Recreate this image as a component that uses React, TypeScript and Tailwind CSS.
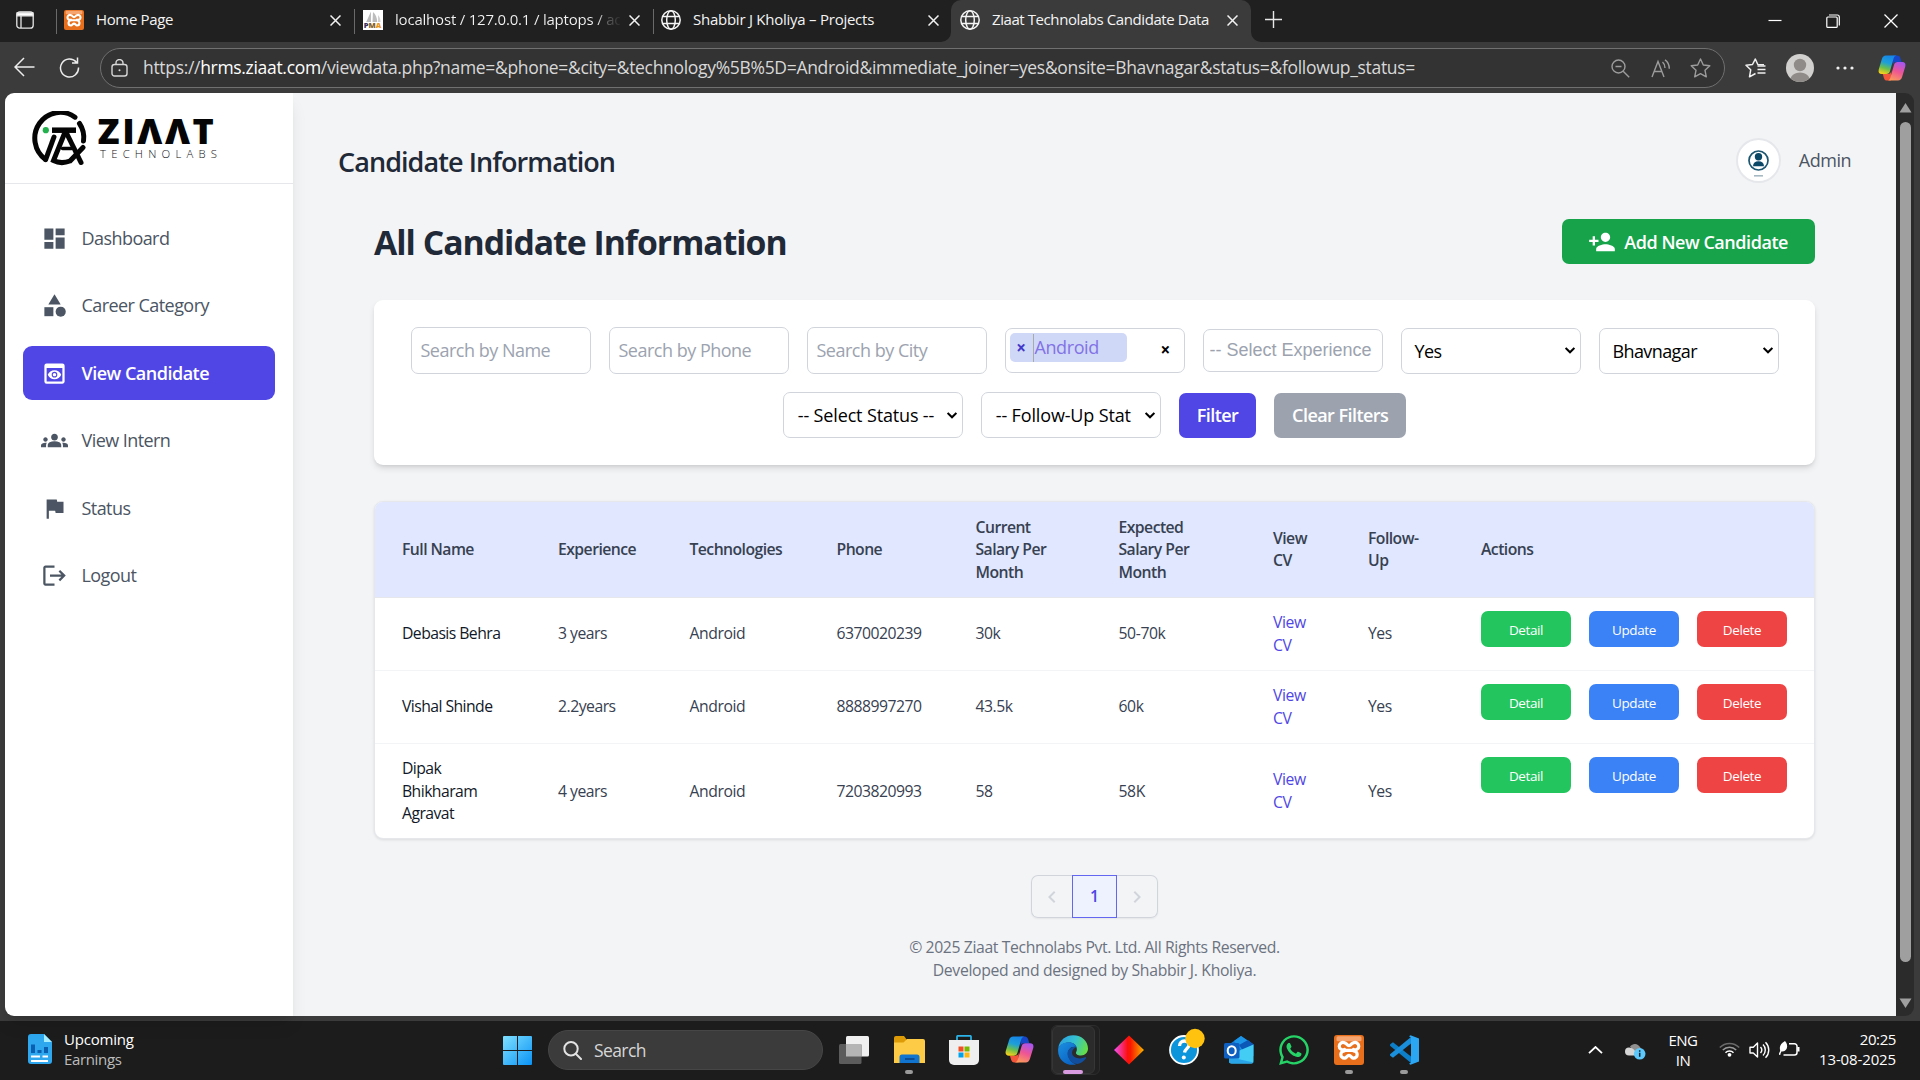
import React from 'react';
import type { ReactNode } from 'react';
import {
  MdCategory,
  MdChevronLeft,
  MdChevronRight,
  MdDashboard,
  MdFlag,
  MdGroups,
  MdLogout,
  MdPersonAdd,
  MdPreview,
} from 'react-icons/md';
import { FaWhatsapp } from 'react-icons/fa';

/* ---------- browser icons ---------- */

function CloseX() {
  return (
    <svg width="11" height="11" viewBox="0 0 11 11" stroke="#f2f2f2" strokeWidth="1.5" className="shrink-0">
      <path d="M0.5 0.5l10 10M10.5 0.5l-10 10" />
    </svg>
  );
}

function Globe() {
  return (
    <svg width="20" height="20" viewBox="0 0 20 20" fill="none" stroke="#f5f5f5" strokeWidth="1.5" className="shrink-0">
      <circle cx="10" cy="10" r="9.2" />
      <ellipse cx="10" cy="10" rx="4.3" ry="9.2" />
      <path d="M1.6 6.6h16.8M1.6 13.4h16.8" />
    </svg>
  );
}

function XamppIcon({ size }: { size: number }) {
  return (
    <svg width={size} height={size} viewBox="0 0 30 30" className="shrink-0">
      <rect width="30" height="30" rx="3" fill="#e8701c" />
      <rect x="2.5" y="1.2" width="25" height="5" rx="1.5" fill="#f6a571" />
      <path
        d="M10.5 7.8a3.7 3.7 0 1 0 0 6.7M19.5 7.8a3.7 3.7 0 1 1 0 6.7M10.5 23.2a3.7 3.7 0 1 1 0-7.4M19.5 23.2a3.7 3.7 0 1 0 0-7.4M10.5 7.8c2 0 2.4 2.8 4.5 2.8s2.5-2.8 4.5-2.8M10.5 23.2c2 0 2.4-2.8 4.5-2.8s2.5 2.8 4.5 2.8M11 15.3h8"
        fill="none"
        stroke="#fff"
        strokeWidth="3.2"
        strokeLinecap="round"
      />
    </svg>
  );
}

function PmaIcon() {
  return (
    <svg width="20" height="20" viewBox="0 0 20 20" className="shrink-0">
      <rect width="20" height="20" fill="#fff" />
      <path d="M8 1.5V12H3.2zM10 2c3 2.500 4 6 4.200 10H9.500z" fill="#bdbdbd" />
      <path d="M15 5c2 2 2.500 5 2.500 7H15z" fill="#d2d2d2" />
      <text x="0.8" y="18.3" fontSize="7.5" fontWeight="800" fontFamily="Open Sans, sans-serif" fill="#34345e">
        P<tspan fill="#8a5f2a">M</tspan><tspan fill="#e8941a">A</tspan>
      </text>
    </svg>
  );
}

function Copilot({ id, size }: { id: string; size: number }) {
  return (
    <svg width={size} height={size} viewBox="0 0 28 28" className="shrink-0">
      <defs>
        <linearGradient id={id + 'a'} x1="0.6" y1="0" x2="0.3" y2="1">
          <stop offset="0" stopColor="#1686e8" />
          <stop offset="0.4" stopColor="#1e9fd8" />
          <stop offset="0.7" stopColor="#6cc04a" />
          <stop offset="1" stopColor="#f6cf1c" />
        </linearGradient>
        <linearGradient id={id + 'b'} x1="0.7" y1="0" x2="0.3" y2="1">
          <stop offset="0" stopColor="#a855f0" />
          <stop offset="0.5" stopColor="#ee5594" />
          <stop offset="1" stopColor="#fb9a5c" />
        </linearGradient>
      </defs>
      <path d="M15 1.500h4c2 0 3 1.300 3.500 3L23.500 8h-5c-2 0-3 1-3.500 3z" fill="#1746c8" />
      <path d="M13 26.500H9c-1.700 0-2.600-1-3.100-2.600L4.800 20H10c2 0 2.800-1 3.300-3z" fill="#f2553a" />
      <path d="M8 1.500h10.500c-1.700.3-2.500 1.500-3 3.300l-3.400 12C11.500 19 10.300 20 8.300 20H3.800C1 20 0 18 .8 15.200L3.900 5C4.600 2.800 5.800 1.500 8 1.500z" fill={`url(#${id}a)`} />
      <path d="M20 26.500H9.500c1.700-.3 2.500-1.500 3-3.300l3.400-12C16.500 9 17.700 8 19.700 8h4.500c2.800 0 3.800 2 3 4.800L24.100 23c-.7 2.200-1.900 3.500-4.100 3.500z" fill={`url(#${id}b)`} />
    </svg>
  );
}

/* ---------- browser chrome ---------- */

function Separator() {
  return <div className="mt-[9px] h-[25px] w-px bg-[#6a6a6a]" />;
}

function TabStrip() {
  return (
    <div className="flex h-[42px] bg-[#202020] text-[15px] leading-[36px] text-[#f4f4f4]">
      <div className="flex w-[56px] pt-[11px] pl-4">
        <svg width="18" height="18" viewBox="0 0 18 18" fill="none" stroke="#e6e6e6" strokeWidth="1.300">
          <rect x="0.8" y="0.8" width="16.4" height="16.4" rx="3" />
          <path d="M5 5v12" />
          <path d="M1 1.800h16v3H1z" fill="#fff" />
        </svg>
      </div>
      <Separator />
      <div className="flex h-10 w-[297px] items-center pl-[7px]">
        <XamppIcon size={20} />
        <span className="ml-3 flex-1 pb-[2px] tracking-[-0.36px]">Home Page</span>
        <CloseX />
        <span className="w-[13px]" />
      </div>
      <Separator />
      <div className="flex h-10 w-[298px] items-center pl-2">
        <PmaIcon />
        <span className="ml-3 w-[225px] bg-[linear-gradient(90deg,#f4f4f4_202px,#666_212px,#202020_228px)] bg-clip-text pb-[2px] tracking-[-0.2px] whitespace-nowrap text-transparent">
          localhost / 127.0.0.1 / laptops / ad
        </span>
        <span className="w-[9px]" />
        <CloseX />
      </div>
      <Separator />
      <div className="flex h-10 w-[297px] items-center pl-[7px]">
        <Globe />
        <span className="ml-3 flex-1 pb-[2px] tracking-[-0.25px] whitespace-nowrap">Shabbir J Kholiya – Projects</span>
        <CloseX />
        <span className="w-[12px]" />
      </div>
      <div className="relative flex h-[42px] w-[300px] rounded-t-[10px] bg-[#3b3b3b]">
        <svg width="10" height="10" viewBox="0 0 10 10" className="absolute bottom-0 -left-[10px]">
          <path d="M10 0v10H0A10 10 0 0 0 10 0z" fill="#3b3b3b" />
        </svg>
        <svg width="10" height="10" viewBox="0 0 10 10" className="absolute -right-[10px] bottom-0">
          <path d="M0 0v10h10A10 10 0 0 1 0 0z" fill="#3b3b3b" />
        </svg>
        <div className="flex h-10 w-full items-center pl-[9px]">
          <Globe />
          <span className="ml-3 flex-1 pb-[2px] tracking-[-0.42px] whitespace-nowrap">Ziaat Technolabs Candidate Data</span>
          <CloseX />
          <span className="w-[13px]" />
        </div>
      </div>
      <svg width="17" height="17" viewBox="0 0 17 17" stroke="#e8e8e8" strokeWidth="1.400" className="mt-[11px] ml-[14px]">
        <path d="M8.500 0v17M0 8.500h17" />
      </svg>
      <div className="mt-[14px] mr-[22px] ml-auto flex gap-[44px]">
        <svg width="14" height="14" viewBox="0 0 14 14" stroke="#fff" strokeWidth="1.200">
          <path d="M0.500 6.500h13" />
        </svg>
        <svg width="14" height="14" viewBox="0 0 14 14" fill="none" stroke="#fff" strokeWidth="1.200">
          <rect x="0.800" y="3" width="10.400" height="10.400" rx="1" />
          <path d="M3 1h8.300a2 2 0 0 1 2 2v8.500" />
        </svg>
        <svg width="14" height="14" viewBox="0 0 14 14" stroke="#fff" strokeWidth="1.300">
          <path d="M0.500 0.500l13 13M13.500 0.500l-13 13" />
        </svg>
      </div>
    </div>
  );
}

function Toolbar() {
  return (
    <div className="flex h-[51px] items-start bg-[#3b3b3b]">
      <svg width="21" height="20" viewBox="0 0 21 20" fill="none" stroke="#ededed" strokeWidth="1.500" className="mt-[15px] ml-[14px]">
        <path d="M20.500 10H1M10 1L1 10l9 9" />
      </svg>
      <svg width="21" height="21" viewBox="0 0 21 21" fill="none" stroke="#ededed" strokeWidth="1.500" className="mt-[15px] ml-6">
        <path d="M17.500 5.300A9 9 0 1 0 19.500 10.500M18.500 0.500v5.500h-5.500" />
      </svg>
      <div className="mt-[6px] ml-[20px] flex h-10 w-[1625px] items-center rounded-full border border-[#707070] bg-[#333333] pr-[13px] pl-[10px]">
        <svg width="17" height="18" viewBox="0 0 17 18" fill="none" stroke="#d6d6d6" strokeWidth="1.400">
          <rect x="1" y="5.500" width="15" height="11.500" rx="2.500" />
          <path d="M5 5.500V4a3.500 3.500 0 0 1 7 0v1.500" />
          <circle cx="8.500" cy="11.200" r="1" fill="#d6d6d6" stroke="none" />
        </svg>
        <span className="ml-[15px] flex-1 pb-[2px] text-[17.5px] leading-[34px] tracking-[-0.315px] whitespace-nowrap text-[#d8d8d8]">
          https://<span className="text-white">hrms.ziaat.com</span>
          /viewdata.php?name=&amp;phone=&amp;city=&amp;technology%5B%5D=Android&amp;immediate_joiner=yes&amp;onsite=Bhavnagar&amp;status=&amp;followup_status=
        </span>
        <svg width="19" height="19" viewBox="0 0 19 19" fill="none" stroke="#9c9c9c" strokeWidth="1.400">
          <circle cx="7.500" cy="7.500" r="6.500" />
          <path d="M12.200 12.200l6 6M4.500 7.500h6" />
        </svg>
        <svg width="20" height="19" viewBox="0 0 20 19" fill="none" stroke="#9c9c9c" strokeWidth="1.400" className="ml-[21px]">
          <path d="M1 18L7 2.500 13 18M3.200 12.500h7.600M11.500 3c1.800 1.500 2.500 3.500 2.500 6M14 0.800c3 2 4.300 5 4.300 9" />
        </svg>
        <svg width="21" height="20" viewBox="0 0 21 20" fill="none" stroke="#9c9c9c" strokeWidth="1.400" strokeLinejoin="round" className="ml-[19px]">
          <path d="M10.500 1l2.800 6 6.500.8-4.800 4.500 1.300 6.500-5.800-3.200-5.800 3.200L6 12.300 1.200 7.800l6.500-.8z" />
        </svg>
      </div>
      <svg width="21" height="20" viewBox="0 0 21 20" fill="none" stroke="#f0f0f0" strokeWidth="1.500" strokeLinejoin="round" className="mt-4 ml-[20px]">
        <path d="M19 6.800L12.800 6.500 10.300 1 7.500 6.500 1 7.300l4.700 4.500-1.200 7 6-3.300" />
        <path d="M12.500 8h8M12.500 11.500h8M12.500 15h8" />
      </svg>
      <svg width="28" height="28" viewBox="0 0 28 28" className="mt-[12px] ml-5">
        <clipPath id="profile"><circle cx="14" cy="14" r="14" /></clipPath>
        <g clipPath="url(#profile)">
          <rect width="28" height="28" fill="#d2d0ce" />
          <circle cx="14" cy="11" r="6.200" fill="#8f8b88" />
          <path d="M4 28c0-6 4-9.500 10-9.500S24 22 24 28z" fill="#8f8b88" />
        </g>
      </svg>
      <svg width="18" height="4" viewBox="0 0 18 4" fill="#f0f0f0" className="mt-6 ml-[22px]">
        <circle cx="2" cy="2" r="1.600" />
        <circle cx="9" cy="2" r="1.600" />
        <circle cx="16" cy="2" r="1.600" />
      </svg>
      <div className="mt-[12px] ml-[24px]">
        <Copilot id="cpTop" size={28} />
      </div>
    </div>
  );
}

function Scrollbar() {
  return (
    <div className="flex w-[18px] flex-col items-center rounded-r-[9px] bg-[#2b2b2b] pt-[10px] pb-2">
      <svg width="13" height="10" viewBox="0 0 13 10" fill="#9f9f9f"><path d="M6.500 0L12.500 9.500h-12z" /></svg>
      <div className="mt-[9px] h-[840px] w-[11px] rounded-full bg-[#9f9f9f]" />
      <svg width="13" height="10" viewBox="0 0 13 10" fill="#9f9f9f" className="mt-auto"><path d="M6.500 10L0.500 0.500h12z" /></svg>
    </div>
  );
}

/* ---------- sidebar ---------- */

function Logo() {
  return (
    <svg width="188" height="56" viewBox="0 0 188 56">
      <g fill="none" stroke="#050505" strokeWidth="5" strokeLinecap="round">
        <path d="M43 6.200A25 25.500 0 0 0 13.500 48.500" />
        <path d="M47.500 12.500A25 25 0 0 1 51.500 30" />
        <path d="M20 19.200H44" strokeLinecap="butt" strokeWidth="5.500" />
        <path d="M22 26L13.700 48.500" />
        <path d="M33.500 20L21.500 49.500Q29 53.500 38 50L51 36.500" />
        <path d="M33.500 20L49 51.500" />
        <path d="M30.500 37.500h9" strokeWidth="3.500" />
      </g>
      <circle cx="13.800" cy="19.200" r="3.100" fill="#22b14c" />
      <text x="65.500" y="32.800" fontFamily="Open Sans, sans-serif" fontWeight="800" fontSize="34.500" letterSpacing="2.500" fill="#050505" textLength="119" lengthAdjust="spacingAndGlyphs">
        ZIΛΛT
      </text>
      <text x="68" y="46.800" fontFamily="Open Sans, sans-serif" fontWeight="300" fontSize="11.300" fill="#111" textLength="117">
        TECHNOLABS
      </text>
    </svg>
  );
}

const navItems: { label: string; icon: ReactNode; active?: boolean }[] = [
  { label: 'Dashboard', icon: <MdDashboard size={27} /> },
  { label: 'Career Category', icon: <MdCategory size={27} /> },
  { label: 'View Candidate', icon: <MdPreview size={27} />, active: true },
  { label: 'View Intern', icon: <MdGroups size={27} /> },
  { label: 'Status', icon: <MdFlag size={27} /> },
  { label: 'Logout', icon: <MdLogout size={27} /> },
];

function Sidebar() {
  return (
    <aside className="z-10 flex w-[288px] flex-col rounded-l-[9px] bg-white shadow-[0_11px_17px_-3px_rgba(0,0,0,0.1),0_4px_7px_-4px_rgba(0,0,0,0.1)]">
      <div className="h-[91px] border-b border-[#e5e7eb] pt-[18px] pl-[27px]">
        <Logo />
      </div>
      <nav className="flex flex-col gap-[13.5px] px-[18px] pt-[27px]">
        {navItems.map((item) => (
          <a
            key={item.label}
            className={
              item.active
                ? 'flex h-[54px] items-center gap-[13.5px] rounded-[9px] bg-[#4f46e5] px-[18px] text-[18px] font-semibold tracking-[-0.5px] text-white'
                : 'flex h-[54px] items-center gap-[13.5px] rounded-[9px] px-[18px] text-[18px] tracking-[-0.56px] text-[#4b5563]'
            }
          >
            {item.icon}
            <span>{item.label}</span>
          </a>
        ))}
      </nav>
    </aside>
  );
}

/* ---------- filters ---------- */

function SearchInput({ placeholder }: { placeholder: string }) {
  return (
    <input
      placeholder={placeholder}
      className="h-[47px] w-[180px] rounded-[7px] border border-[#d1d5db] bg-white px-[9px] pb-[2px] text-[18px] tracking-[-0.5px] placeholder:text-[#9ca3af]"
    />
  );
}

function SelectBox({ label, tight = true }: { label: string; tight?: boolean }) {
  return (
    <div className="flex h-[46px] w-[180px] items-center rounded-[7px] border border-[#d1d5db] bg-white pr-[4px] pl-[13px] text-[18px] text-black">
      <span className={tight ? 'flex-1 pt-px tracking-[-0.6px] whitespace-nowrap' : 'flex-1 pt-px pl-px tracking-[-0.15px] whitespace-nowrap'}>
        {label}
      </span>
      <svg width="10" height="7" viewBox="0 0 10 7" fill="none" stroke="#000" strokeWidth="2.100" className="mr-px shrink-0">
        <path d="M0.600 0.900L5 5.200 9.400 0.900" />
      </svg>
    </div>
  );
}

function FilterCard() {
  return (
    <section className="mt-9 flex flex-wrap items-center justify-center gap-[18px] rounded-[9px] bg-white p-[27px] shadow-[0_4px_7px_-1px_rgba(0,0,0,0.12),0_2px_4px_-2px_rgba(0,0,0,0.12)]">
      <SearchInput placeholder="Search by Name" />
      <SearchInput placeholder="Search by Phone" />
      <SearchInput placeholder="Search by City" />
      <div className="flex h-[45px] w-[180px] items-start rounded-[7px] border border-[#d1d5db] bg-white pt-1 pl-1">
        <div className="flex h-[29px] w-[117px] items-center rounded-[5px] bg-[#cfd8f7] text-[18px] text-[#8272e6]">
          <span className="flex w-[24px] justify-center border-r border-[#aaaaaa] text-[17px] leading-[28px] font-bold text-[#4338ca]">×</span>
          <span className="pl-px tracking-[-0.4px]">Android</span>
        </div>
        <span className="ml-[34px] pt-[3px] text-[17px] leading-[28px] font-bold text-black">×</span>
      </div>
      <div className="flex h-[43px] w-[180px] items-center overflow-hidden rounded-[7px] border border-[#d1d5db] bg-white pl-[6px]">
        <span className="h-[21px] overflow-hidden font-['Liberation_Sans'] text-[18px] leading-[20px] whitespace-nowrap text-[#9ca3af]">
          -- Select Experience
        </span>
      </div>
      <SelectBox label="Yes" />
      <SelectBox label="Bhavnagar" />
      <SelectBox label="-- Select Status --" tight={false} />
      <SelectBox label="-- Follow-Up Stat" tight={false} />
      <button className="h-[45px] rounded-[7px] bg-[#4f46e5] px-[18px] pt-px text-[18px] font-semibold tracking-[-0.6px] text-white">Filter</button>
      <button className="h-[45px] rounded-[7px] bg-[#9ca3af] px-[18px] pt-px text-[18px] font-semibold tracking-[-0.56px] text-white">Clear Filters</button>
    </section>
  );
}

/* ---------- table ---------- */

const columns = [
  { label: 'Full Name', width: 156 },
  { label: 'Experience', width: 131.5 },
  { label: 'Technologies', width: 147 },
  { label: 'Phone', width: 139 },
  { label: 'Current Salary Per Month', width: 143 },
  { label: 'Expected Salary Per Month', width: 154.5 },
  { label: 'View CV', width: 95 },
  { label: 'Follow-Up', width: 113 },
  { label: 'Actions', width: 360 },
];

const candidates = [
  { name: 'Debasis Behra', experience: '3 years', phone: '6370020239', current: '30k', expected: '50-70k' },
  { name: 'Vishal Shinde', experience: '2.2years', phone: '8888997270', current: '43.5k', expected: '60k' },
  { name: 'Dipak Bhikharam Agravat', experience: '4 years', phone: '7203820993', current: '58', expected: '58K' },
];

function CandidateTable() {
  return (
    <section className="mt-9 overflow-hidden rounded-[9px] border border-[#e5e7eb] bg-white shadow-[0_1px_3px_rgba(0,0,0,0.1)]">
      <table className="w-full table-fixed border-collapse text-left text-[15.75px] leading-[22.5px] tracking-[-0.5px] text-[#374151]">
        <colgroup>
          {columns.map((c) => (
            <col key={c.label} style={{ width: c.width }} />
          ))}
        </colgroup>
        <thead className="bg-[#e0e7ff]">
          <tr className="h-[95px] border-b border-[#e5e7eb]">
            {columns.map((c) => (
              <th key={c.label} className="pr-[24px] pl-[27px] font-semibold tracking-[-0.55px]">
                {c.label}
              </th>
            ))}
          </tr>
        </thead>
        <tbody>
          {candidates.map((c) => (
            <tr key={c.name} className="h-[73px] border-b border-[#f3f4f6] last:h-[95px] last:border-b-0">
              <td className="pr-[24px] pl-[27px] tracking-[-0.56px] text-[#111827]">{c.name}</td>
              <td className="pl-[27px]">{c.experience}</td>
              <td className="pl-[27px] tracking-[-0.42px]">Android</td>
              <td className="pl-[27px]">{c.phone}</td>
              <td className="pl-[27px]">{c.current}</td>
              <td className="pl-[27px] tracking-[-0.4px]">{c.expected}</td>
              <td className="pr-[27px] pl-[27px] tracking-[-0.4px] text-[#4f46e5]">View CV</td>
              <td className="pl-[27px]">Yes</td>
              <td className="pt-[13px] pl-[27px] align-top">
                <div className="flex gap-[18px] text-[13.5px] leading-[35px] tracking-[-0.4px] text-white">
                  <button className="h-9 w-[90px] rounded-[7px] bg-[#22c55e] pt-[2px]">Detail</button>
                  <button className="h-9 w-[90px] rounded-[7px] bg-[#3b82f6] pt-[2px]">Update</button>
                  <button className="h-9 w-[90px] rounded-[7px] bg-[#ef4444] pt-[2px]">Delete</button>
                </div>
              </td>
            </tr>
          ))}
        </tbody>
      </table>
    </section>
  );
}

function Pagination() {
  return (
    <div className="mt-9 flex justify-center">
      <div className="flex h-[43px] rounded-[7px] shadow-[0_1px_2px_rgba(0,0,0,0.06)]">
        <span className="flex w-[41px] items-center justify-center rounded-l-[7px] border border-r-0 border-[#d1d5db] text-[#d1d5db]">
          <MdChevronLeft size={24} />
        </span>
        <span className="flex w-[45px] items-center justify-center border border-[#6366f1] bg-[#eef2ff] text-[15.75px] font-semibold text-[#4f46e5]">1</span>
        <span className="flex w-[41px] items-center justify-center rounded-r-[7px] border border-l-0 border-[#d1d5db] text-[#d1d5db]">
          <MdChevronRight size={24} />
        </span>
      </div>
    </div>
  );
}

function Main() {
  return (
    <main className="flex flex-1 flex-col bg-[#f3f4f6] pt-[45px] pr-[45px] pl-[45px]">
      <header className="flex h-[45px] items-center justify-between">
        <h1 className="pt-[4px] text-[27px] font-semibold tracking-[-0.93px] text-[#1f2937]">Candidate Information</h1>
        <div className="flex items-center gap-[18px]">
          <svg width="45" height="45" viewBox="0 0 45 45">
            <circle cx="22.500" cy="22.500" r="21.500" fill="#fff" stroke="#e5e7eb" strokeWidth="2" />
            <circle cx="22.500" cy="22.500" r="9.500" fill="none" stroke="#1b5570" strokeWidth="1.700" />
            <circle cx="22.500" cy="18.800" r="3.700" fill="#0a4766" />
            <path d="M17 28.300c.2-3.300 2-5 5.500-5s5.300 1.700 5.500 5z" fill="#0a4766" />
            <path d="M18 37.800h9" stroke="#a5b9c3" strokeWidth="1.600" />
          </svg>
          <span className="text-[18px] tracking-[-0.5px] text-[#4b5563]">Admin</span>
        </div>
      </header>
      <div className="px-9 pt-9">
        <div className="flex h-[45px] items-center justify-between">
          <h2 className="pt-[2px] text-[33.75px] font-bold tracking-[-1px] text-[#1f2937]">All Candidate Information</h2>
          <button className="flex h-[45px] items-center rounded-[7px] bg-[#16a34a] pr-[27px] pl-[26px] text-[18px] font-semibold tracking-[-0.45px] text-white">
            <MdPersonAdd size={28} />
            <span className="ml-[8px] pt-px">Add New Candidate</span>
          </button>
        </div>
        <FilterCard />
        <CandidateTable />
        <Pagination />
        <footer className="mt-[18px] text-center text-[15.75px] leading-[22.5px] text-[#6b7280]">
          <p className="tracking-[-0.38px]">© 2025 Ziaat Technolabs Pvt. Ltd. All Rights Reserved.</p>
          <p className="tracking-[-0.32px]">Developed and designed by Shabbir J. Kholiya.</p>
        </footer>
      </div>
    </main>
  );
}

/* ---------- taskbar ---------- */

function EdgeIcon() {
  return (
    <svg width="30" height="30" viewBox="0 0 30 30" className="shrink-0">
      <defs>
        <linearGradient id="edgeTop" x1="0" y1="0.3" x2="1" y2="0.6">
          <stop offset="0" stopColor="#2a9fe0" />
          <stop offset="0.500" stopColor="#35c1d0" />
          <stop offset="1" stopColor="#66e043" />
        </linearGradient>
        <linearGradient id="edgeLeft" x1="0" y1="0" x2="0.700" y2="1">
          <stop offset="0" stopColor="#1b8fe0" />
          <stop offset="1" stopColor="#0a63c4" />
        </linearGradient>
      </defs>
      <path d="M0.300 13C1.500 5 8 0.300 15.200 0.300 24 0.300 30 6.500 30 13.500c0 4-3 7-7 7-3.500 0-5.500-1.500-5-3 .6-1.300 1-2.200.8-4C18.300 9.500 15 7.500 11 7.500 6 7.500 2 10 0.300 13z" fill="url(#edgeTop)" />
      <path d="M0.300 13C2 9.500 6 7.300 10.500 7.300c4 0 7 2 8 4.700-5-1.500-9.500 2.500-8.500 8 .8 4.500 4 8 8 9.500C8 31.500-1.500 24 0.300 13z" fill="url(#edgeLeft)" />
      <path d="M18.500 12c-6-1-10.500 4-8.500 9.500 1.500 4.500 5.500 7.500 9.500 7.500 3.500-.8 6.500-3 8.500-5.800.4-.8-.3-1.200-.8-.9C21 25 13.800 22.500 14 17.500c.1-2.500 2-4.300 4.500-5.500z" fill="#114f9e" />
    </svg>
  );
}

function TaskCell({ children, mark }: { children: ReactNode; mark?: boolean }) {
  return (
    <div className="flex w-[55px] flex-col items-center pt-[13px]">
      <div className="flex h-[31px] items-center">{children}</div>
      {mark && <div className="mt-[5px] h-1 w-2 rounded-full bg-[#9a9a9a]" />}
    </div>
  );
}

function Taskbar() {
  return (
    <div className="flex h-[59px] bg-[#1c1c1c] text-[15px] text-white">
      <div className="flex w-[503px] pt-[8px] pl-[28px]">
        <svg width="24" height="30" viewBox="0 0 24 30" className="mt-[5px]">
          <path d="M3 0h13l8 8v19a3 3 0 0 1-3 3H3a3 3 0 0 1-3-3V3a3 3 0 0 1 3-3z" fill="#2ea7ee" />
          <path d="M16 0l8 8h-8z" fill="#a4ecff" />
          <path d="M3 10.500h4v8.500H3zM9.500 16h4v3h-4zM16 13h4v6h-4z" fill="#0b5fb0" />
          <path d="M3 22.500h9M14.500 22.500H20M3 27h17" stroke="#fff" strokeWidth="2" />
        </svg>
        <div className="ml-3 leading-[20px]">
          <div className="tracking-[-0.2px]">Upcoming</div>
          <div className="tracking-[-0.35px] text-[#bdbdbd]">Earnings</div>
        </div>
      </div>
      <svg width="29" height="29" viewBox="0 0 29 29" className="mt-[15px]">
        <defs>
          <linearGradient id="win" x1="0" y1="0" x2="29" y2="29" gradientUnits="userSpaceOnUse">
            <stop offset="0" stopColor="#7fe0ff" />
            <stop offset="1" stopColor="#0a93f5" />
          </linearGradient>
        </defs>
        <path d="M1 0h13v14H0V1a1 1 0 0 1 1-1zM15 0h13a1 1 0 0 1 1 1v13H15zM0 15h14v14H1a1 1 0 0 1-1-1zM15 15h14v13a1 1 0 0 1-1 1H15z" fill="url(#win)" />
      </svg>
      <div className="mt-[9px] ml-4 flex h-10 w-[275px] items-center rounded-full border border-[#464646] bg-[#3b3b3b] pl-[14px]">
        <svg width="19" height="19" viewBox="0 0 19 19" fill="none" stroke="#e3e3e3" strokeWidth="2" strokeLinecap="round">
          <circle cx="8" cy="7.800" r="6.700" />
          <path d="M13 13l5 5" />
        </svg>
        <span className="ml-[12px] pt-px text-[17.5px] tracking-[-0.6px] text-[#d6d6d6]">Search</span>
      </div>
      <div className="ml-[3.5px] flex">
        <TaskCell>
          <svg width="30" height="28" viewBox="0 0 30 28">
            <rect x="7" width="23" height="20.500" rx="1.500" fill="#f0f0f0" />
            <rect y="8" width="22.500" height="20" rx="1.500" fill="#5c5c5c" />
            <path d="M7 8h15.500v12.500H7z" fill="#b5b5b5" />
          </svg>
        </TaskCell>
        <TaskCell mark>
          <svg width="31" height="27" viewBox="0 0 31 27">
            <path d="M0 2a2 2 0 0 1 2-2h8l3 4-3 4H0z" fill="#dd9c07" />
            <path d="M0 6.500h9.500L13 3h16a2 2 0 0 1 2 2v22H0z" fill="#fdcb46" />
            <path d="M5.500 27v-6a2.500 2.500 0 0 1 2.500-2.500h15a2.500 2.500 0 0 1 2.500 2.500v6z" fill="#1174cf" />
            <path d="M11 23h9.500" stroke="#0b3f7f" strokeWidth="1.500" />
          </svg>
        </TaskCell>
        <TaskCell>
          <svg width="30" height="30" viewBox="0 0 30 30">
            <path d="M8 7V1.700A1 1 0 0 1 9 .8h12a1 1 0 0 1 1 .9V7" fill="none" stroke="#2bb5ea" strokeWidth="1.700" />
            <path d="M0 5h30v20a5 5 0 0 1-5 5H5a5 5 0 0 1-5-5z" fill="#efefef" />
            <path d="M9.500 11.500h5v5h-5z" fill="#f04e23" />
            <path d="M15.500 11.500h5v5h-5z" fill="#7ab800" />
            <path d="M9.500 17.500h5v5h-5z" fill="#00a2ec" />
            <path d="M15.500 17.500h5v5h-5z" fill="#fdb813" />
          </svg>
        </TaskCell>
        <TaskCell><Copilot id="cpTask" size={29} /></TaskCell>
        <div className="w-[55px] pt-1 pl-[4px]">
          <div className="w-[49px] rounded-[6px] border border-[#2d2d2d] bg-[#202020]">
            <div className="flex h-[48px] w-[43px] flex-col items-center rounded-[6px] border border-[#363636] bg-[#2b2b2b] pt-[8px]">
              <EdgeIcon />
              <div className="mt-[5px] h-1 w-5 shrink-0 rounded-full bg-[#d99be0]" />
            </div>
          </div>
        </div>
        <TaskCell>
          <svg width="30" height="30" viewBox="0 0 30 30">
            <defs>
              <linearGradient id="diamond">
                <stop offset="0.050" stopColor="#f24be0" />
                <stop offset="0.450" stopColor="#fb1010" />
                <stop offset="0.550" stopColor="#fb1800" />
                <stop offset="0.950" stopColor="#f5a400" />
              </linearGradient>
            </defs>
            <path d="M15 0.500L30 15 15 29.500 0 15z" fill="url(#diamond)" />
          </svg>
        </TaskCell>
        <TaskCell>
          <div className="relative h-[30px] w-[30px]">
            <svg width="36" height="38" viewBox="0 -7 36 38" className="absolute -top-[7px] left-0 max-w-none">
              <circle cx="15" cy="15" r="14" fill="#0d95dc" stroke="#fff" strokeWidth="1.800" />
              <path d="M10.500 11c0-3 2-5 5-5s5 2 4.500 4.500c-.5 2.500-4 3.500-4.500 7" fill="none" stroke="#fff" strokeWidth="3.300" />
              <circle cx="14.800" cy="22.500" r="2" fill="#fff" />
              <circle cx="26" cy="3.500" r="9.700" fill="#ffc20e" />
            </svg>
          </div>
        </TaskCell>
        <TaskCell>
          <svg width="30" height="28" viewBox="0 0 30 28">
            <path d="M5 8.500L17 0l12.500 8.500V20L17 26H5z" fill="#1277d4" />
            <path d="M10 5l7-5 12.500 8.500-11 7.500z" fill="#1b95e8" />
            <path d="M15 9l9-5 5.500 4.500-10 7z" fill="#0a57b8" />
            <path d="M5 19l24.500-10.500V25a2.500 2.500 0 0 1-2.500 2.500H7.500A2.500 2.500 0 0 1 5 25z" fill="#43cdf5" />
            <path d="M5 21l24.500 5.500-1.500 1H7.500A2.500 2.500 0 0 1 5 25z" fill="#2ba5ea" />
            <rect y="7" width="15.500" height="15.500" rx="1.500" fill="#0f5fc0" />
            <ellipse cx="7.700" cy="14.700" rx="4" ry="4.500" fill="none" stroke="#fff" strokeWidth="2" />
          </svg>
        </TaskCell>
        <TaskCell><FaWhatsapp size={34} color="#25d366" /></TaskCell>
        <TaskCell mark><XamppIcon size={30} /></TaskCell>
        <TaskCell mark>
          <svg width="30" height="30" viewBox="0 0 30 30">
            <path d="M1.200 9.200L4 7.300 22 21.500V28L1 10.800z" fill="#0d7fc9" />
            <path d="M1.200 20.800L4 22.700 22 8.500V2L1 19.200z" fill="#1a8fdc" />
            <path d="M21.500 0.200L30 3.500v23l-8.500 3.300-1.500-1 2-1.300V2.500l-2-1.300z" fill="#2ba6f2" />
          </svg>
        </TaskCell>
      </div>
      <svg width="15" height="8" viewBox="0 0 15 8" fill="none" stroke="#fff" strokeWidth="1.800" className="mt-[25px] ml-auto">
        <path d="M1 7.200L7.500 1 14 7.200" />
      </svg>
      <svg width="21" height="18" viewBox="0 0 21 18" className="mt-[21px] ml-[22px]">
        <path d="M5 4.500A6 6 0 0 1 15 5l2.500 4L9 10z" fill="#909090" />
        <path d="M4 13.500a4 4 0 0 1 0-8c2 0 4 .5 6 3.500l2 4.500z" fill="#d5d5d5" />
        <circle cx="14.700" cy="11.800" r="5.800" fill="#5cc8fb" />
        <path d="M14.700 10.800v4M14.700 8.200v1.600" stroke="#123" strokeWidth="1.500" />
      </svg>
      <div className="mt-[9px] ml-[22px] w-[30px] text-center leading-[20px] tracking-[-0.5px]">
        <div>ENG</div>
        <div>IN</div>
      </div>
      <svg width="21" height="16" viewBox="0 0 21 16" fill="none" strokeWidth="1.500" className="mt-[20px] ml-[21px]">
        <path d="M0.800 6.500a13.700 13.700 0 0 1 19.400 0" stroke="#6a6a6a" />
        <path d="M3.800 9a9.500 9.500 0 0 1 13.400 0" stroke="#9a9a9a" />
        <path d="M6.500 11.700a5.700 5.700 0 0 1 8 0" stroke="#fff" />
        <circle cx="10.500" cy="13.800" r="1.900" fill="#fff" />
      </svg>
      <svg width="21" height="18" viewBox="0 0 21 18" fill="none" stroke="#fff" strokeWidth="1.400" strokeLinejoin="round" className="mt-[20px] ml-[9px]">
        <path d="M1 6.200h3.300L8.500 2v14l-4.200-4H1z" />
        <path d="M11.500 6a4.500 4.500 0 0 1 0 6M14 3.600a7.500 7.500 0 0 1 0 10.800M16.500 1.200a11 11 0 0 1 0 15.600" />
      </svg>
      <svg width="21" height="17" viewBox="0 0 21 17" fill="none" stroke="#fff" strokeWidth="1.500" className="mt-[19px] ml-[9px]">
        <path d="M10 3.800h5.500a2.500 2.500 0 0 1 2.500 2.500v6.200a2.500 2.500 0 0 1-2.500 2.500H4.500" />
        <path d="M19.400 7v4.500" strokeWidth="2.200" />
        <path d="M0.500 14.800C1 11 3 9 5.500 6" />
        <path d="M1.500 11C-.5 6.500 2 3.500 6 1c2.800 3 3 7.800-.5 10-1.300.7-2.800.6-4 0z" fill="#fff" stroke="none" />
      </svg>
      <div className="mt-[8px] mr-[24px] ml-[18px] w-[78px] text-right leading-[20px] tracking-[-0.13px]">
        <div className="tracking-[-0.4px]">20:25</div>
        <div>13-08-2025</div>
      </div>
    </div>
  );
}

export default function App() {
  return (
    <div className="flex h-[1080px] w-[1920px] flex-col overflow-hidden bg-[#3b3b3b] font-['Open_Sans',sans-serif]">
      <TabStrip />
      <Toolbar />
      <div className="mb-[5px] ml-[5px] flex h-[923px] w-[1909px]">
        <Sidebar />
        <Main />
        <Scrollbar />
      </div>
      <Taskbar />
    </div>
  );
}
